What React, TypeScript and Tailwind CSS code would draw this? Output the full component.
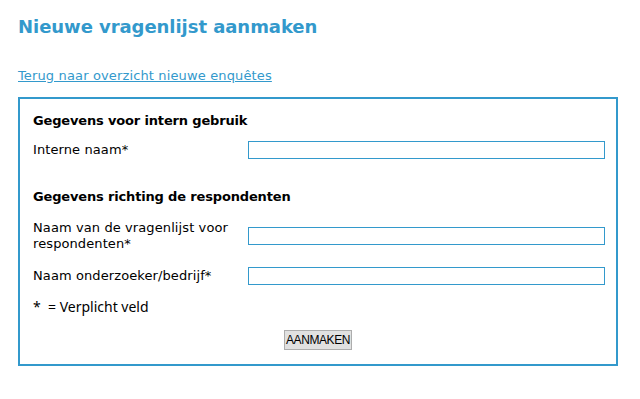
export default function App() {
  return (
    <div className="min-h-[399px] bg-white px-[18px] pt-[16px] font-['DejaVu_Sans',Verdana,sans-serif] text-[13px] leading-[16px] text-black">
      <h1 className="text-[18px] font-bold leading-[22px] tracking-[-0.05px] text-[#3399cc]">Nieuwe vragenlijst aanmaken</h1>

      <a href="#" className="mt-[30px] block w-fit tracking-[0.14px] text-[#3399cc] underline">
        Terug naar overzicht nieuwe enquêtes
      </a>

      <form className="mt-[13px] w-[600px] border-2 border-[#3399cc] pb-[14px] pl-[13px] pr-[11px] pt-[14px]">
        <h2 className="font-bold tracking-[-0.16px]">Gegevens voor intern gebruik</h2>

        <div className="mt-[12px] flex items-center">
          <label className="w-[215px] tracking-[0.1px]">Interne naam*</label>
          <input type="text" className="h-[18px] w-[357px] border border-[#3399cc] bg-white" />
        </div>

        <h2 className="mt-[30px] font-bold tracking-[-0.16px]">Gegevens richting de respondenten</h2>

        <div className="mt-[15px] flex items-center">
          <label className="w-[215px] pr-[10px] tracking-[0.1px]">Naam van de vragenlijst voor respondenten*</label>
          <input type="text" className="h-[18px] w-[357px] border border-[#3399cc] bg-white" />
        </div>

        <div className="mt-[15px] flex items-center">
          <label className="w-[215px] tracking-[0.1px]">Naam onderzoeker/bedrijf*</label>
          <input type="text" className="h-[18px] w-[357px] border border-[#3399cc] bg-white" />
        </div>

        <p className="mt-[14px] font-['Noto_Sans',sans-serif] text-[14px]">*&nbsp; = Verplicht veld</p>

        <div className="mt-[15px] flex justify-center pr-[2px]">
          <button
            type="button"
            className="h-[20px] border border-[#adadad] bg-[#e1e1e1] px-[1px] font-['Liberation_Sans',Arial,sans-serif] text-[12px] leading-[18px] tracking-[-0.4px] text-black"
          >
            AANMAKEN
          </button>
        </div>
      </form>
    </div>
  );
}
